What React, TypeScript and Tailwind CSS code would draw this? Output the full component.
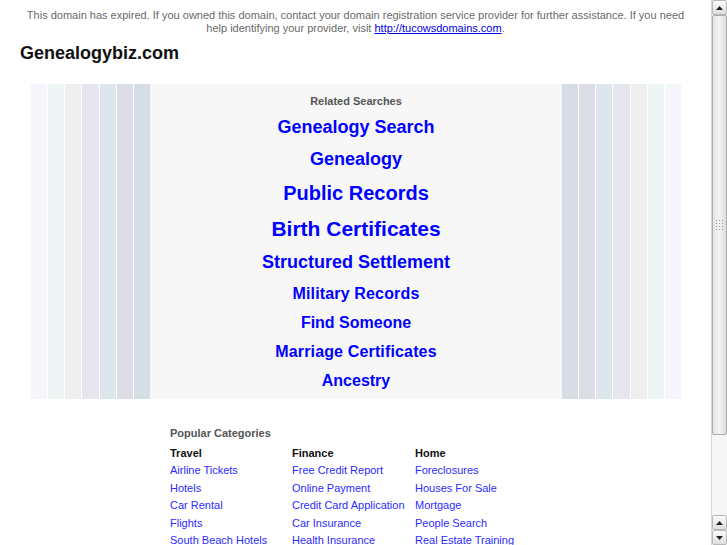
import { ReactNode } from 'react'

const leftStripes = ['#f5f6fb', '#eef6f5', '#efefef', '#e6e6ef', '#dde5ee', '#dcdde6', '#d5dee7']
const rightStripes = [...leftStripes].reverse()

const related = [
  { label: 'Genealogy Search', cls: 'mt-[7px] text-[18px] leading-[24px]' },
  { label: 'Genealogy', cls: 'mt-[8px] text-[18px] leading-[24px]' },
  { label: 'Public Records', cls: 'mt-[9px] text-[20px] leading-[26px]' },
  { label: 'Birth Certificates', cls: 'mt-[9px] text-[21px] leading-[27px]' },
  { label: 'Structured Settlement', cls: 'mt-[8px] text-[18px] leading-[24px]' },
  { label: 'Military Records', cls: 'mt-[9px] text-[16px] leading-[22px] tracking-[0.15px]' },
  { label: 'Find Someone', cls: 'mt-[7px] text-[16px] leading-[22px]' },
  { label: 'Marriage Certificates', cls: 'mt-[7px] text-[16px] leading-[22px] tracking-[0.15px]' },
  { label: 'Ancestry', cls: 'mt-[7px] text-[16px] leading-[22px]' },
]

const categories = [
  { title: 'Travel', links: ['Airline Tickets', 'Hotels', 'Car Rental', 'Flights', 'South Beach Hotels'] },
  { title: 'Finance', links: ['Free Credit Report', 'Online Payment', 'Credit Card Application', 'Car Insurance', 'Health Insurance'] },
  { title: 'Home', links: ['Foreclosures', 'Houses For Sale', 'Mortgage', 'People Search', 'Real Estate Training'] },
]

function Stripes({ colors }: { colors: string[] }) {
  return (
    <div className="flex w-[119px] gap-px">
      {colors.map((c, i) => (
        <div key={i} className="flex-1" style={{ backgroundColor: c }} />
      ))}
    </div>
  )
}

function ScrollButton({ children }: { children: ReactNode }) {
  return (
    <div className="flex h-[15px] items-center justify-center rounded-[2px] border border-[#b8b8b8] bg-gradient-to-b from-[#fafafa] to-[#dedede]">
      {children}
    </div>
  )
}

function Arrow({ down }: { down?: boolean }) {
  return (
    <svg width="7" height="4" viewBox="0 0 7 4">
      <path d={down ? 'M0 0h7L3.5 4z' : 'M0 4h7L3.5 0z'} fill="#222" />
    </svg>
  )
}

function Scrollbar() {
  return (
    <div className="flex w-4 flex-col border-l border-[#d4d4d4] bg-[#f1f1f1]">
      <ScrollButton>
        <Arrow />
      </ScrollButton>
      <div className="flex h-[420px] items-center justify-center rounded-[2px] border border-[#acacac] bg-gradient-to-r from-[#e4e4e8] via-[#f4f4f6] to-[#dcdce0]">
        <div className="grid grid-cols-3 gap-[2px]">
          {Array.from({ length: 12 }).map((_, i) => (
            <div key={i} className="h-px w-px bg-[#9a9a9a]" />
          ))}
        </div>
      </div>
      <div className="flex-1 bg-[#f6f6f6]" />
      <ScrollButton>
        <Arrow />
      </ScrollButton>
      <ScrollButton>
        <Arrow down />
      </ScrollButton>
    </div>
  )
}

export default function App() {
  return (
    <div className="flex h-[545px] w-[727px] overflow-hidden bg-white font-['Liberation_Sans',Arial,sans-serif]">
      <div className="w-[711px]">
        <p className="px-[24px] pt-[9px] text-center text-[11px] leading-[13px] text-[#6a6a6a]">
          This domain has expired. If you owned this domain, contact your domain registration service provider for
          further assistance. If you need help identifying your provider, visit{' '}
          <a href="#" className="text-[#0000dd] underline">
            http://tucowsdomains.com
          </a>
          .
        </p>

        <h1 className="ml-[20px] mt-[6px] text-[18px] font-bold leading-[24px] text-[#111]">Genealogybiz.com</h1>

        <div className="ml-[31px] mt-[19px] flex h-[315px] w-[650px]">
          <Stripes colors={leftStripes} />
          <div className="flex flex-1 flex-col items-center bg-[#f7f7f7] pt-[11px]">
            <div className="text-[11px] font-bold leading-[13px] text-[#555]">Related Searches</div>
            {related.map((r) => (
              <a key={r.label} href="#" className={`font-bold text-[#0000ff] ${r.cls}`}>
                {r.label}
              </a>
            ))}
          </div>
          <Stripes colors={rightStripes} />
        </div>

        <div className="ml-[170px] mt-[28px]">
          <div className="text-[11px] font-bold leading-[13px] text-[#555]">Popular Categories</div>
          <div className="mt-[5px] grid grid-cols-[122px_123px_140px] text-[11px] leading-[17.4px]">
            {categories.map((cat) => (
              <div key={cat.title} className="flex flex-col">
                <div className="font-bold text-[#111]">{cat.title}</div>
                {cat.links.map((l) => (
                  <a key={l} href="#" className="whitespace-nowrap text-[#2b2bff]">
                    {l}
                  </a>
                ))}
              </div>
            ))}
          </div>
        </div>
      </div>
      <Scrollbar />
    </div>
  )
}
